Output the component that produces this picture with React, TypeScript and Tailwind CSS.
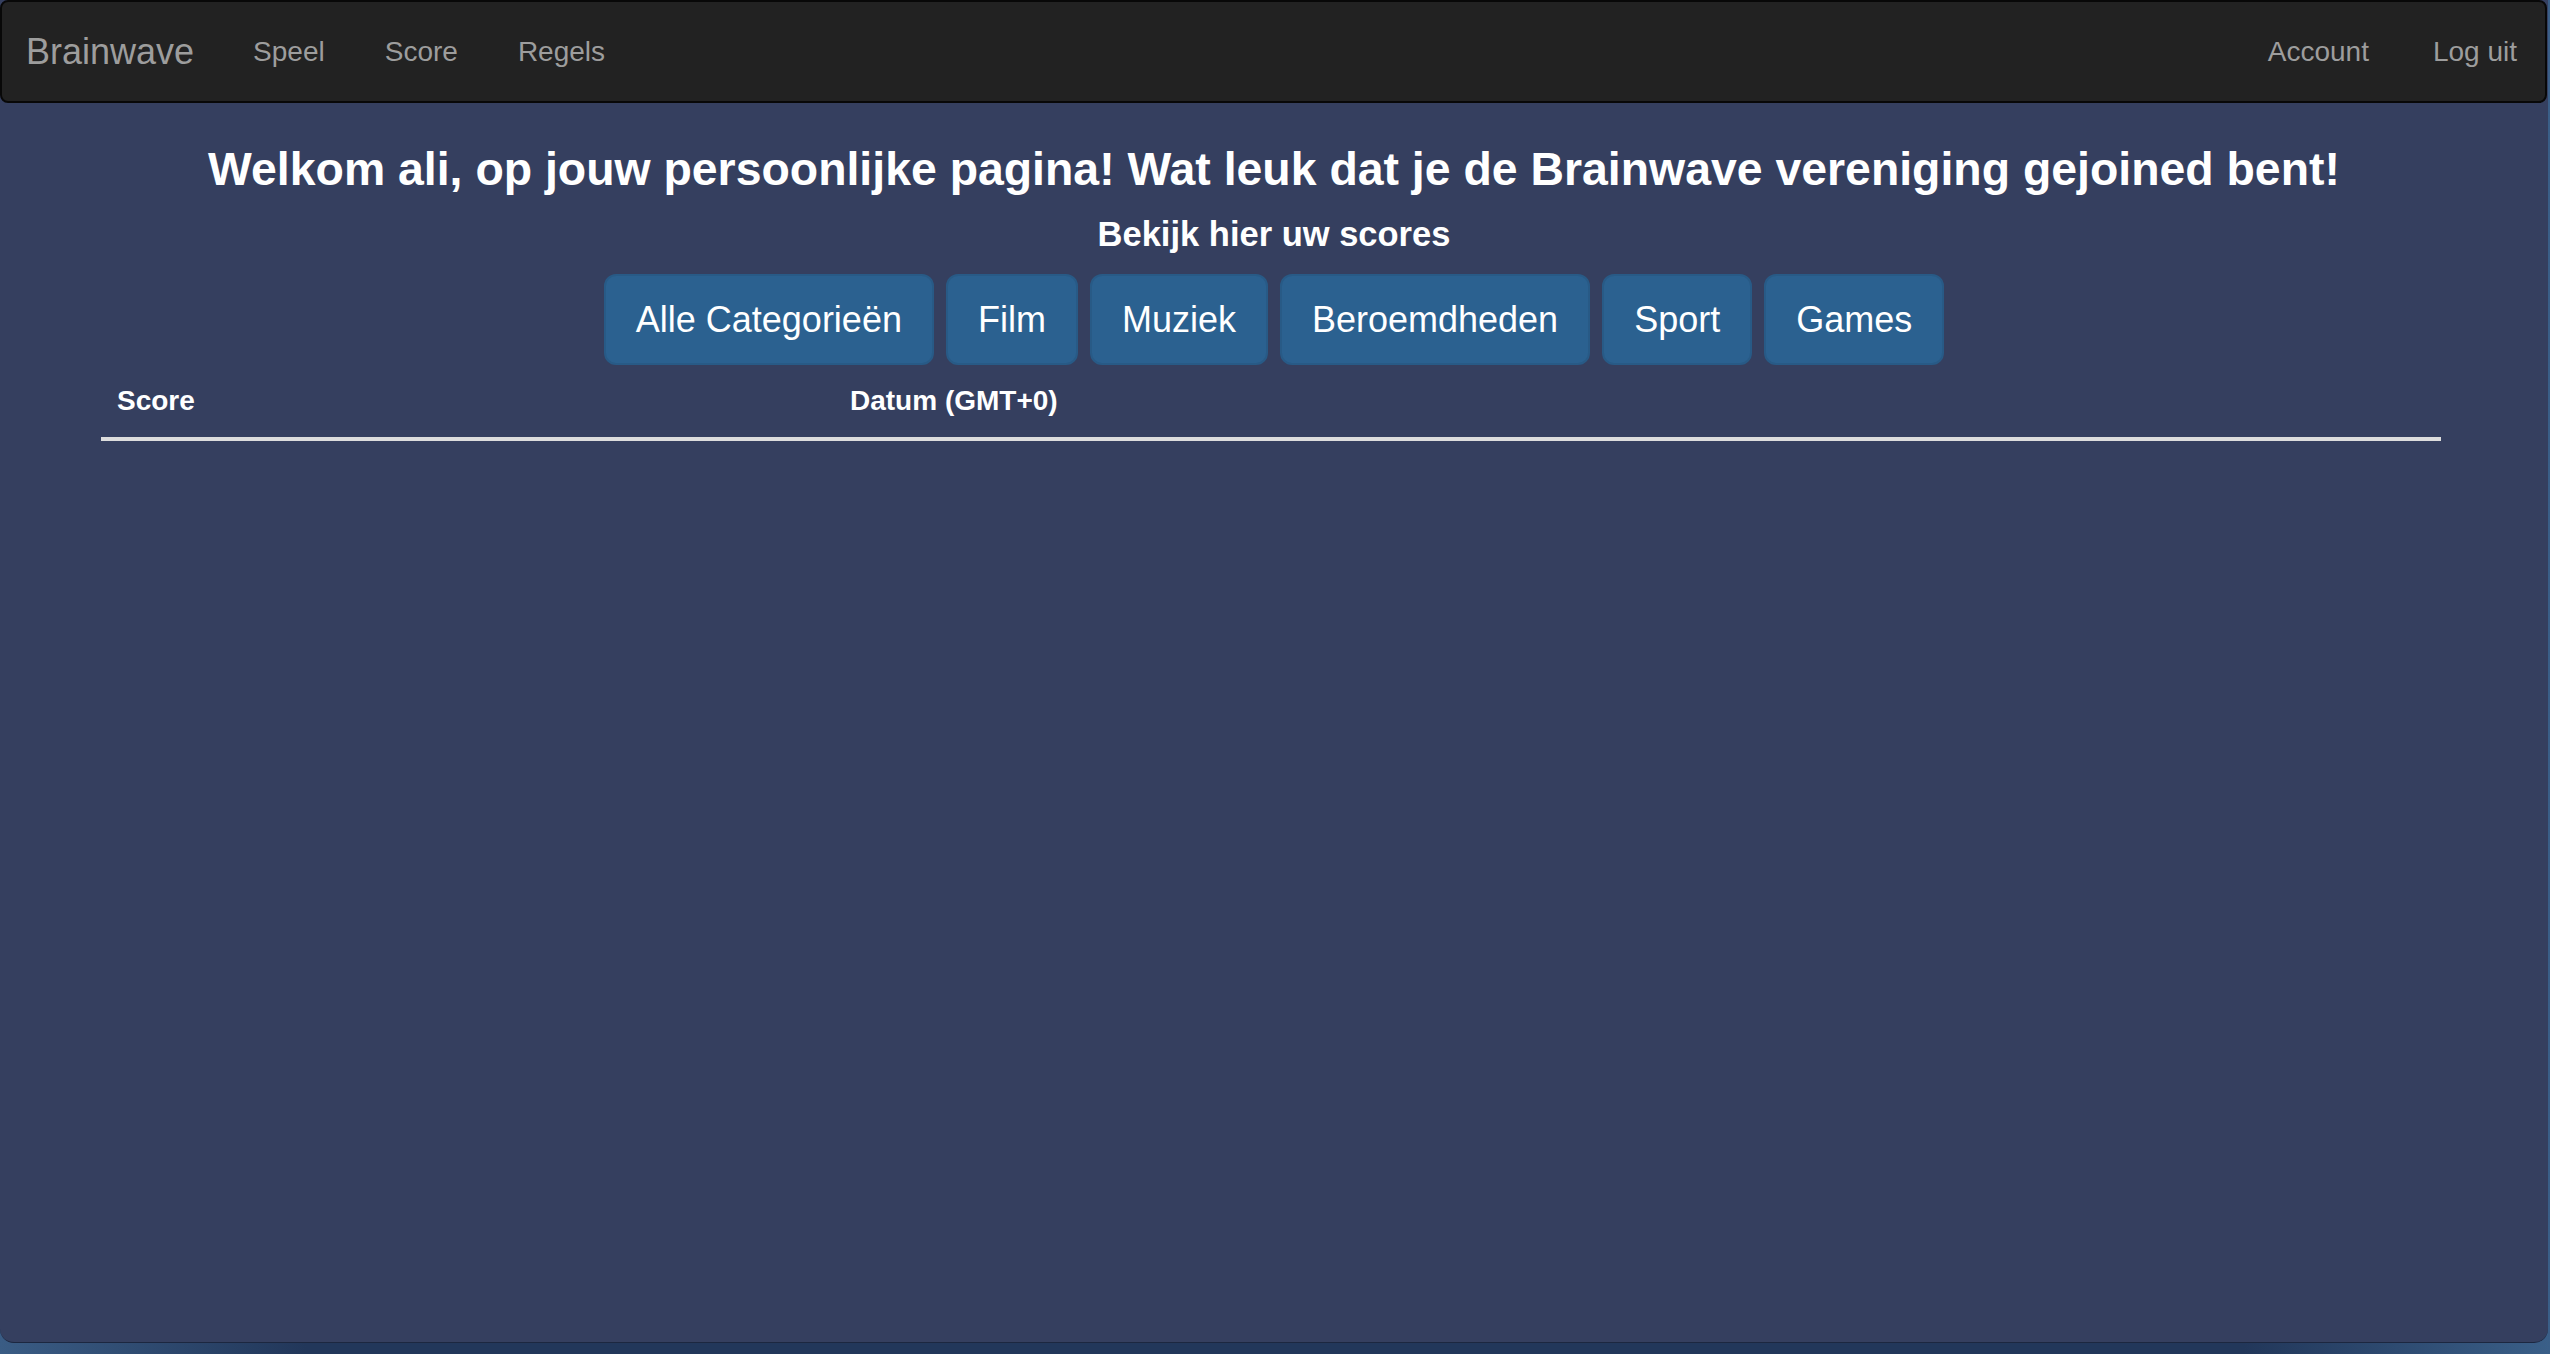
import React from "react";

export default function App() {
  const cats = ["Alle Categorieën", "Film", "Muziek", "Beroemdheden", "Sport", "Games"];
  return (
    <div className="w-[2550px] h-[1354px] overflow-hidden bg-[linear-gradient(90deg,#3a5c84_0%,#22375a_12%,#22375a_88%,#3a5f88_100%)] font-['Liberation_Sans','Helvetica',Arial,sans-serif]">
      <div className="w-[2548px] h-[1343px] bg-[#353f5f] rounded-b-[14px] border-b border-[#1c2740] flex flex-col overflow-hidden">
        <nav className="h-[103px] shrink-0 w-[2547px] bg-[#222222] border-2 border-[#080808] rounded-[8px] flex items-center justify-between text-[#9d9d9d]">
          <div className="flex items-center">
            <span className="pl-[24px] pr-[59px] text-[36px]">Brainwave</span>
            <div className="flex items-center gap-[60px] text-[28px]">
              <span>Speel</span>
              <span>Score</span>
              <span>Regels</span>
            </div>
          </div>
          <div className="flex items-center gap-[64px] text-[28px] pr-[28px]">
            <span>Account</span>
            <span>Log uit</span>
          </div>
        </nav>

        <h3 className="mt-[40px] text-center text-white text-[46.4px] leading-[53px] font-bold">
          Welkom ali, op jouw persoonlijke pagina! Wat leuk dat je de Brainwave vereniging gejoined bent!
        </h3>
        <h4 className="mt-[20px] text-center text-white text-[34.5px] leading-[37px] font-bold">
          Bekijk hier uw scores
        </h4>

        <div className="mt-[21px] flex justify-center gap-[12px]">
          {cats.map((c) => (
            <button
              key={c}
              className="h-[91px] px-[30px] text-[36px] leading-[48px] text-white bg-[#2b6190] border-2 border-[#285a86] rounded-[12px]"
            >
              {c}
            </button>
          ))}
        </div>

        <div className="mx-[101px] w-[2340px]">
          <div className="grid grid-cols-[733px_1fr] border-b-4 border-[#dddddd] text-white text-[28px] leading-[40px] font-bold">
            <div className="p-[16px]">Score</div>
            <div className="p-[16px]">Datum (GMT+0)</div>
          </div>
        </div>
      </div>
    </div>
  );
}
